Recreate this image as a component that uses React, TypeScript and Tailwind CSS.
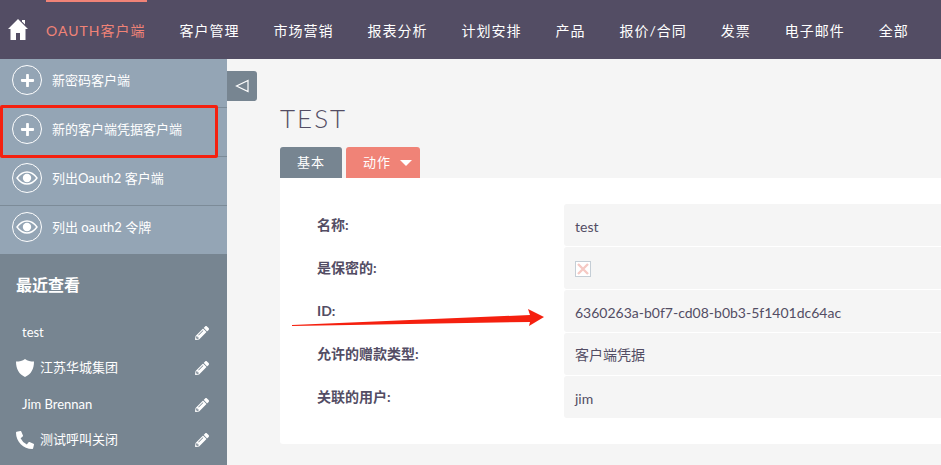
import { FaPencilAlt, FaPhoneAlt, FaPlus } from 'react-icons/fa'

const font = "font-['Lato','Noto_Sans_CJK_SC',sans-serif]"

const navItems = ['客户管理', '市场营销', '报表分析', '计划安排', '产品', '报价/合同', '发票', '电子邮件', '全部']

const actions = [
  { label: '新密码客户端', icon: 'plus' },
  { label: '新的客户端凭据客户端', icon: 'plus' },
  { label: '列出Oauth2 客户端', icon: 'eye' },
  { label: '列出 oauth2 令牌', icon: 'eye' },
]

const recent = [
  { name: 'test', icon: null },
  { name: '江苏华城集团', icon: 'shield' },
  { name: 'Jim Brennan', icon: null },
  { name: '测试呼叫关闭', icon: 'phone' },
]

const fields = [
  { label: '名称:', value: 'test', cjk: false },
  { label: '是保密的:', value: null, cjk: false },
  { label: 'ID:', value: '6360263a-b0f7-cd08-b0b3-5f1401dc64ac', cjk: false },
  { label: '允许的赠款类型:', value: '客户端凭据', cjk: true },
  { label: '关联的用户:', value: 'jim', cjk: false },
]

const HomeIcon = () => (
  <svg width="20" height="21" viewBox="0 0 20 21" fill="#fff">
    <path d="M10 0 L20 10 L17.5 10 L17.5 21 L12 21 L12 14 L8 14 L8 21 L2.5 21 L2.5 10 L0 10 Z" />
    <path d="M14 1 H17 V5.5 L14 2.5 Z" />
  </svg>
)

const EyeIcon = () => (
  <svg width="22" height="14" viewBox="0 0 22 14">
    <path d="M1 7 C5 1.5 8 1 11 1 C14 1 17 1.5 21 7 C17 12.5 14 13 11 13 C8 13 5 12.5 1 7 Z" fill="none" stroke="#fff" strokeWidth="1.4" />
    <circle cx="11" cy="7" r="4.2" fill="#fff" />
  </svg>
)

const ShieldIcon = () => (
  <svg className="mr-[6px]" width="18" height="18" viewBox="0 0 18 18" fill="#fff">
    <path d="M9 0 C11.5 1.8 14.5 2.6 18 2.6 C18 10 15 15.5 9 18 C3 15.5 0 10 0 2.6 C3.5 2.6 6.5 1.8 9 0 Z" />
  </svg>
)

export default function App() {
  return (
    <div className={`relative h-[465px] w-[941px] overflow-hidden bg-[#f5f5f5] ${font}`}>
      {/* top bar */}
      <div className="relative flex h-[59px] items-center bg-[#534d64] pt-[2px] text-[14px] tracking-[1px] text-white">
        <div className="absolute left-[46px] top-0 h-[2px] w-[101px] bg-[#f08377]" />
        <div className="flex w-[46px] pb-[3px] pl-[8px]">
          <HomeIcon />
        </div>
        <div className="text-[#f08377]">OAUTH客户端</div>
        <div className="ml-[34px] flex gap-[34px]">
          {navItems.map(item => (
            <span key={item}>{item}</span>
          ))}
        </div>
      </div>

      <div className="flex h-[406px]">
        {/* sidebar */}
        <div className="flex w-[227px] shrink-0 flex-col">
          <div className="bg-[#94a5b5]">
            {actions.map((a, i) => (
              <div
                key={a.label}
                className={`flex gap-[10px] pl-[12px] pt-[6px] text-[13px] text-white ${i < 3 ? 'h-[49px] border-b border-[#7c8b98]' : 'h-[48px]'}`}
              >
                <div className="flex h-[30px] w-[30px] items-center justify-center rounded-full border border-white">
                  {a.icon === 'plus' ? <FaPlus className="h-[15px] w-[15px]" /> : <EyeIcon />}
                </div>
                <span className="leading-[30px]">{a.label}</span>
              </div>
            ))}
          </div>
          <div className="flex-1 bg-[#778591] text-white">
            <div className="pl-[16px] pt-[21px] text-[16px] font-bold leading-[20px]">最近查看</div>
            <div className="mt-[20px]">
              {recent.map(r => (
                <div
                  key={r.name}
                  className={`flex h-[36px] items-center pl-[16px] pr-[18px] text-[13px] ${r.icon ? 'pb-[2px]' : ''}`}
                >
                  {r.icon === 'shield' && <ShieldIcon />}
                  {r.icon === 'phone' && <FaPhoneAlt className="mr-[6px] h-[18px] w-[18px]" />}
                  {!r.icon && <span className="w-[6px]" />}
                  <span className="flex-1">{r.name}</span>
                  <FaPencilAlt className="h-[14px] w-[14px]" />
                </div>
              ))}
            </div>
          </div>
        </div>

        {/* main */}
        <div className="flex-1">
          <div className="mt-[12px] flex h-[30px] w-[30px] items-center justify-center rounded-r-[3px] bg-[#778591]">
            <svg width="14" height="14" viewBox="0 0 14 14">
              <path d="M13 1.5 L1.5 7 L13 12.5 Z" fill="none" stroke="#fff" strokeWidth="1.2" />
            </svg>
          </div>
          <div className="pl-[53px]">
            <h1 className="h-[46px] text-[26px] font-light leading-[34px] tracking-[2px] text-[#534d64]">TEST</h1>
            <div className="flex gap-[4px] text-[13px] tracking-[1px] text-white">
              <div className="flex h-[31px] w-[62px] items-center justify-center rounded-t-[3px] bg-[#778591]">基本</div>
              <div className="flex h-[31px] w-[74px] items-center gap-[9px] rounded-t-[3px] bg-[#f08377] pl-[17px]">
                动作
                <span className="h-0 w-0 border-x-[6px] border-t-[6px] border-x-transparent border-t-white" />
              </div>
            </div>
            <div className="h-[266px] rounded-bl-[3px] bg-white pt-[26px] text-[14px] text-[#534d64]">
              {fields.map(f => (
                <div key={f.label} className="mb-[1px] flex h-[42px]">
                  <div className="w-[284px] pl-[37px] pt-[10px] font-bold leading-[22px]">{f.label}</div>
                  <div className={`flex flex-1 items-center rounded-l-[3px] bg-[#f5f5f5] pl-[11px] ${f.cjk ? 'pt-0' : 'pt-[2px]'}`}>
                    {f.value ?? (
                      <span className="flex h-[16px] w-[16px] items-center justify-center border border-[#c5ced6] bg-white">
                        <svg width="12" height="12" viewBox="0 0 12 12">
                          <path d="M1 1 L11 11 M11 1 L1 11" stroke="#f5c9c4" strokeWidth="2.4" />
                        </svg>
                      </span>
                    )}
                  </div>
                </div>
              ))}
            </div>
          </div>
        </div>
      </div>

      {/* annotations */}
      <div className="absolute left-0 top-[105px] h-[53px] w-[218px] rounded-[2px] border-[3px] border-[#f5200f]" />
      <svg className="absolute left-[290px] top-[305px]" width="260" height="26" viewBox="0 0 260 26">
        <path d="M2 20 L240 10 L238 4 L254 12 L239 21 L240 17 L2 21 Z" fill="#f5200f" />
      </svg>
    </div>
  )
}
